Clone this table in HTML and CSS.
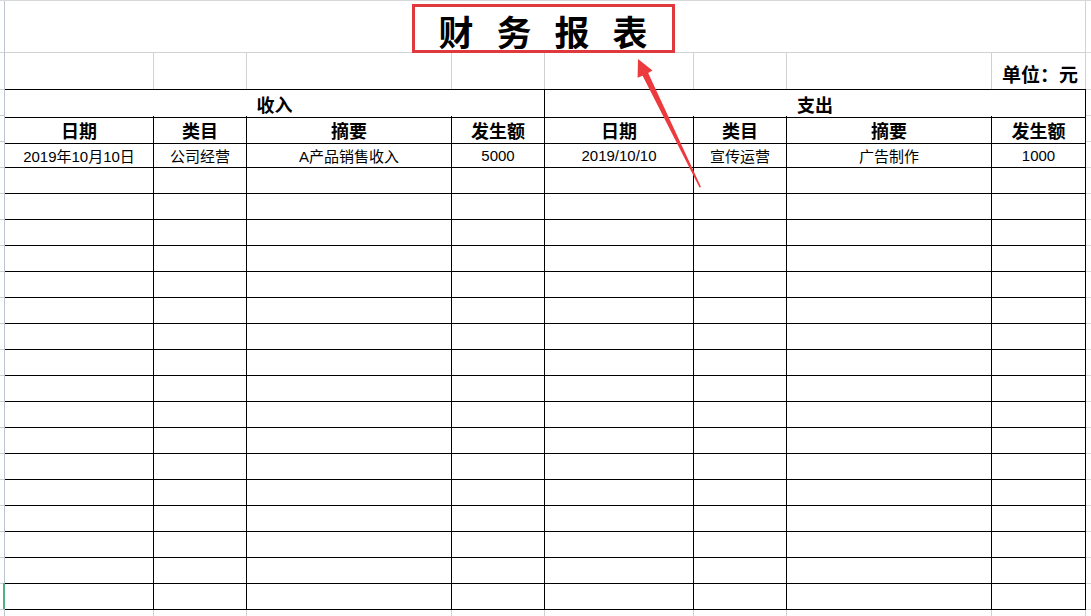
FILE: index.html
```html
<!DOCTYPE html>
<html lang="zh-CN">
<head>
<meta charset="utf-8">
<title>财务报表</title>
<link rel="stylesheet" href="styles.css">
</head>
<body>
<div class="page">
  <div class="gutter"><div class="sel"></div></div>
  <div class="sheet">
    <div class="title-row">
      <div class="title-box"><span class="title">财务报表</span></div>
    </div>
    <div class="row unit-row">
      <div class="c"></div><div class="c"></div><div class="c"></div><div class="c"></div>
      <div class="c"></div><div class="c"></div><div class="c"></div><div class="c unit">单位：元</div>
    </div>
    <div class="table">
      <div class="row head"><div class="c span4">收入</div><div class="c span4">支出</div></div>
      <div class="row head">
        <div class="c">日期</div><div class="c">类目</div><div class="c">摘要</div><div class="c">发生额</div>
        <div class="c">日期</div><div class="c">类目</div><div class="c">摘要</div><div class="c">发生额</div>
      </div>
      <div class="row data">
        <div class="c">2019年10月10日</div><div class="c">公司经营</div><div class="c">A产品销售收入</div><div class="c">5000</div>
        <div class="c">2019/10/10</div><div class="c">宣传运营</div><div class="c">广告制作</div><div class="c">1000</div>
      </div>
      <div class="row data"><div class="c"></div><div class="c"></div><div class="c"></div><div class="c"></div><div class="c"></div><div class="c"></div><div class="c"></div><div class="c"></div></div>
      <div class="row data"><div class="c"></div><div class="c"></div><div class="c"></div><div class="c"></div><div class="c"></div><div class="c"></div><div class="c"></div><div class="c"></div></div>
      <div class="row data"><div class="c"></div><div class="c"></div><div class="c"></div><div class="c"></div><div class="c"></div><div class="c"></div><div class="c"></div><div class="c"></div></div>
      <div class="row data"><div class="c"></div><div class="c"></div><div class="c"></div><div class="c"></div><div class="c"></div><div class="c"></div><div class="c"></div><div class="c"></div></div>
      <div class="row data"><div class="c"></div><div class="c"></div><div class="c"></div><div class="c"></div><div class="c"></div><div class="c"></div><div class="c"></div><div class="c"></div></div>
      <div class="row data"><div class="c"></div><div class="c"></div><div class="c"></div><div class="c"></div><div class="c"></div><div class="c"></div><div class="c"></div><div class="c"></div></div>
      <div class="row data"><div class="c"></div><div class="c"></div><div class="c"></div><div class="c"></div><div class="c"></div><div class="c"></div><div class="c"></div><div class="c"></div></div>
      <div class="row data"><div class="c"></div><div class="c"></div><div class="c"></div><div class="c"></div><div class="c"></div><div class="c"></div><div class="c"></div><div class="c"></div></div>
      <div class="row data"><div class="c"></div><div class="c"></div><div class="c"></div><div class="c"></div><div class="c"></div><div class="c"></div><div class="c"></div><div class="c"></div></div>
      <div class="row data"><div class="c"></div><div class="c"></div><div class="c"></div><div class="c"></div><div class="c"></div><div class="c"></div><div class="c"></div><div class="c"></div></div>
      <div class="row data"><div class="c"></div><div class="c"></div><div class="c"></div><div class="c"></div><div class="c"></div><div class="c"></div><div class="c"></div><div class="c"></div></div>
      <div class="row data"><div class="c"></div><div class="c"></div><div class="c"></div><div class="c"></div><div class="c"></div><div class="c"></div><div class="c"></div><div class="c"></div></div>
      <div class="row data"><div class="c"></div><div class="c"></div><div class="c"></div><div class="c"></div><div class="c"></div><div class="c"></div><div class="c"></div><div class="c"></div></div>
      <div class="row data"><div class="c"></div><div class="c"></div><div class="c"></div><div class="c"></div><div class="c"></div><div class="c"></div><div class="c"></div><div class="c"></div></div>
      <div class="row data"><div class="c"></div><div class="c"></div><div class="c"></div><div class="c"></div><div class="c"></div><div class="c"></div><div class="c"></div><div class="c"></div></div>
      <div class="row data"><div class="c"></div><div class="c"></div><div class="c"></div><div class="c"></div><div class="c"></div><div class="c"></div><div class="c"></div><div class="c"></div></div>
      <div class="row data"><div class="c"></div><div class="c"></div><div class="c"></div><div class="c"></div><div class="c"></div><div class="c"></div><div class="c"></div><div class="c"></div></div>
    </div>
    <div class="row ghost"><div class="c"></div><div class="c"></div><div class="c"></div><div class="c"></div><div class="c"></div><div class="c"></div><div class="c"></div><div class="c"></div></div>
  </div>
  <div class="edge"></div>
  <svg class="arrow" width="1091" height="616" viewBox="0 0 1091 616" aria-hidden="true">
    <polygon points="638,59 652.5,70.5 648.2,73 701,187 699.5,187.5 642.6,75.8 637.6,77.8" fill="#eb3b3e"/>
  </svg>
</div>
</body>
</html>
```

FILE: styles.css
```css
* { box-sizing: border-box; }

html, body {
  margin: 0;
  padding: 0;
  background: #ffffff;
}

body {
  font-family: "Liberation Sans", "Noto Sans CJK SC", sans-serif;
  color: #000;
}

.page {
  --cols: 149px 93px 205px 93px 149px 93px 205px 94px;
  --grid: #d2d2d2;
  position: relative;
  display: flex;
  align-items: flex-start;
  width: 1091px;
  height: 616px;
  overflow: hidden;
  border-top: 1px solid #d6d8dc;
}

/* row-header strip on the left */
.gutter {
  flex: 0 0 5px;
  align-self: stretch;
  display: flex;
  flex-direction: column;
  align-items: flex-end;
  background:
    linear-gradient(to right, transparent 4px, #bfc5ce 4px) 0 0 / 100% 100% no-repeat,
    linear-gradient(#d4d4d4, #d4d4d4) 0 51px / 100% 1px no-repeat,
    repeating-linear-gradient(to bottom, #cfcfcf 0 1px, transparent 1px 26px) 0 88px / 100% 100% no-repeat;
}

.sel {
  flex: 0 0 auto;
  margin-top: 582px;
  width: 2px;
  height: 26px;
  background: #4cb385;
}

.sheet {
  flex: 0 0 1081px;
  display: flex;
  flex-direction: column;
}

.sheet > * { flex-shrink: 0; }

.edge {
  flex: 1 1 auto;
  align-self: stretch;
  background:
    linear-gradient(#dadada, #dadada) 0 51px / 100% 1px no-repeat,
    repeating-linear-gradient(to bottom, #dadada 0 1px, transparent 1px 26px) 0 88px / 100% 100% no-repeat;
}

/* title row */
.title-row {
  height: 52px;
  display: flex;
  justify-content: center;
  align-items: flex-start;
  border-bottom: 1px solid var(--grid);
  border-right: 1px solid var(--grid);
}

.title-box {
  margin-top: 3px;
  margin-right: 4px;
  width: 263px;
  height: 49px;
  border: 3px solid #e0393d;
  display: flex;
  justify-content: center;
  align-items: center;
  padding-left: 23px;
  padding-top: 3px;
}

.title {
  font-family: "Noto Sans CJK SC", sans-serif;
  font-weight: 700;
  font-size: 35px;
  line-height: 1;
  letter-spacing: 23px;
}

/* generic row of 8 columns */
.row {
  display: grid;
  grid-template-columns: var(--cols);
}

.c {
  display: flex;
  align-items: center;
  justify-content: center;
  border-right: 1px solid #000;
  border-bottom: 1px solid #000;
  white-space: nowrap;
}

.span4 { grid-column: span 4; }

.unit-row { height: 36px; }

.unit-row .c {
  border-bottom: none;
  border-right: 1px solid var(--grid);
}

.unit-row .unit {
  justify-content: flex-end;
  padding-right: 7px;
  padding-top: 4px;
  font-family: "Noto Sans CJK SC", sans-serif;
  font-weight: 700;
  font-size: 19px;
}

.table {
  border-top: 1px solid #000;
}

.head, .data { height: 26px; }

.head .c {
  font-family: "Noto Sans CJK SC", sans-serif;
  font-weight: 700;
  font-size: 18px;
  padding-top: 1px;
}

.data .c {
  font-size: 15px;
  padding-top: 2px;
}

.ghost { height: 26px; }

.ghost .c {
  border-bottom: none;
  border-right: 1px solid var(--grid);
}

.arrow {
  position: absolute;
  left: 0;
  top: -1px;
  pointer-events: none;
}
```
